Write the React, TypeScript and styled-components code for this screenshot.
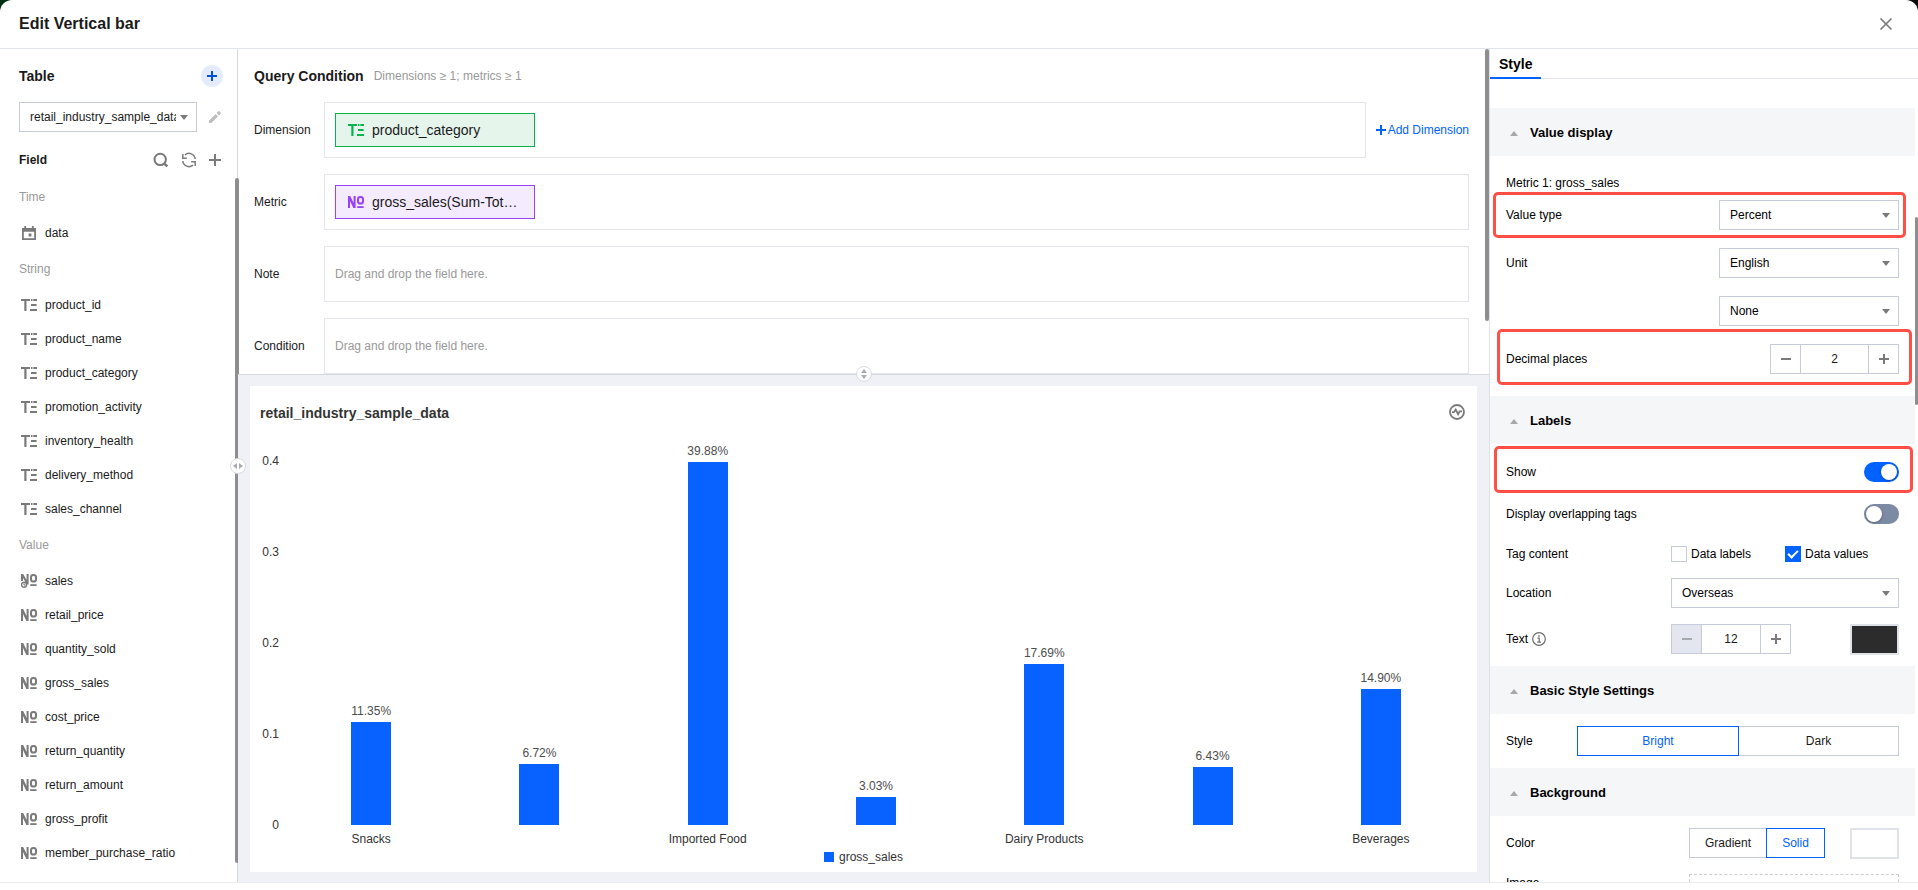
import React from 'react';
import styled, { createGlobalStyle, css } from 'styled-components';

const GlobalStyle = createGlobalStyle`
  *, *::before, *::after { box-sizing: border-box; }
  body {
    margin: 0;
    background: linear-gradient(90deg, #003010 0%, #0a0a0a 40%);
    font-family: "Liberation Sans", Arial, sans-serif;
    font-size: 12px;
    line-height: 18px;
    color: #1a1a1a;
  }
  h1, h2, h3, ul, dl { margin: 0; padding: 0; }
  button, input, select { font: inherit; color: inherit; margin: 0; }
  svg { display: block; flex: none; }
`;

const LINE = '#e3e5ed';
const CONTROL = '#c5cbd9';
const BLUE = '#0062ff';
const BAR_BLUE = '#0762ff';

const Modal = styled.div`
  display: flex;
  flex-direction: column;
  height: 100vh;
  background: #fff;
  border-radius: 12px 12px 0 0;
  overflow: hidden;
`;

const Header = styled.header`
  display: flex;
  align-items: center;
  justify-content: space-between;
  flex: none;
  height: 49px;
  padding: 0 25px 0 19px;
  border-bottom: 1px solid ${LINE};
`;

const Title = styled.h1`
  font-size: 16px;
  line-height: 20px;
`;

const IconButton = styled.button<{ $color?: string }>`
  display: flex;
  align-items: center;
  justify-content: center;
  padding: 0;
  border: 0;
  background: none;
  color: ${(p) => p.$color ?? '#7a7a7a'};
  cursor: pointer;
`;

const Body = styled.div`
  position: relative;
  display: grid;
  grid-template-columns: 238px minmax(0, 1fr) 429px;
  flex: 1;
  min-height: 0;
  margin-bottom: 7px;
  border-bottom: 1px solid #ebebeb;
`;

const SideBar = styled.aside`
  position: relative;
  display: flex;
  flex-direction: column;
  min-height: 0;
  border-right: 1px solid #d5d7de;
`;

const SideTop = styled.div`
  display: flex;
  align-items: center;
  justify-content: space-between;
  flex: none;
  height: 53px;
  padding: 0 14px 0 19px;
`;

const GroupTitle = styled.h2`
  padding-top: 1px;
  font-size: 14px;
  line-height: 20px;
`;

const RoundAdd = styled(IconButton)`
  width: 22px;
  height: 22px;
  border-radius: 50%;
  background: #e4ebfc;
`;

const TablePicker = styled.div`
  display: flex;
  align-items: center;
  justify-content: space-between;
  flex: none;
  height: 30px;
  padding: 0 16px 0 19px;
`;

const SelectWrap = styled.label<{ $width: number }>`
  position: relative;
  display: block;
  width: ${(p) => p.$width}px;
  &::after {
    content: '';
    position: absolute;
    right: 9px;
    top: 13px;
    border: 4px solid transparent;
    border-top: 5px solid #7a7a7a;
    border-bottom: 0;
    pointer-events: none;
  }
`;

const Select = styled.select`
  display: block;
  width: 100%;
  height: 30px;
  padding: 0 20px 0 10px;
  border: 1px solid ${CONTROL};
  border-radius: 0;
  background: #fff;
  appearance: none;
  white-space: nowrap;
  text-overflow: clip;
`;

const FieldBar = styled.div`
  display: flex;
  align-items: center;
  gap: 12px;
  flex: none;
  height: 46px;
  padding: 10px 16px 0 19px;
`;

const FieldTitle = styled.h3`
  flex: 1;
  font-size: 12px;
  line-height: 18px;
`;

const FieldScroll = styled.div`
  flex: 1;
  min-height: 0;
  overflow: hidden;
  padding-left: 19px;
`;

const FieldGroup = styled.h3`
  display: flex;
  align-items: center;
  height: 38px;
  font-size: 12px;
  font-weight: 400;
  color: #999;
`;

const FieldList = styled.ul`
  list-style: none;
`;

const FieldItem = styled.li`
  display: flex;
  align-items: center;
  gap: 8px;
  height: 34px;
  padding-left: 2px;
  svg { color: #7a7a7a; }
`;

const ScrollThumb = styled.i<{ $side: 'left' | 'query' | 'style' }>`
  position: absolute;
  border-radius: 2px;
  background: #8e8e8e;
  ${(p) => p.$side === 'left' && css`right: -2px; top: 129px; bottom: 19px; width: 4px;`}
  ${(p) => p.$side === 'query' && css`right: 0; top: 0; height: 272px; width: 4px;`}
  ${(p) => p.$side === 'style' && css`right: 0; top: 168px; height: 188px; width: 3px;`}
`;

const Center = styled.main`
  position: relative;
  display: flex;
  flex-direction: column;
  min-width: 0;
  min-height: 0;
`;

const Query = styled.section`
  position: relative;
  flex: 0 0 326px;
  overflow: hidden;
  padding: 0 20px 0 16px;
  border-bottom: 1px solid #d8d9dc;
`;

const QueryHead = styled.div`
  display: flex;
  align-items: center;
  gap: 10px;
  height: 53px;
`;

const Hint = styled.span`
  padding-top: 1px;
  color: #999;
`;

const QueryRow = styled.div`
  display: flex;
  align-items: center;
  height: 56px;
  margin-bottom: 16px;
`;

const QueryLabel = styled.span`
  flex: 0 0 70px;
`;

const DropZone = styled.div`
  display: flex;
  align-items: center;
  flex: 1;
  height: 56px;
  padding: 0 10px;
  border: 1px solid ${LINE};
  color: #999;
`;

const Chip = styled.button<{ $tone: 'green' | 'violet' }>`
  display: flex;
  align-items: center;
  gap: 8px;
  width: 200px;
  height: 34px;
  padding: 0 12px;
  border: 1px solid ${(p) => (p.$tone === 'green' ? '#07b34e' : '#9a3ffb')};
  background: ${(p) => (p.$tone === 'green' ? '#e5f5ec' : '#f5ebff')};
  color: #1a1a1a;
  font-size: 14px;
  line-height: 20px;
  svg { color: ${(p) => (p.$tone === 'green' ? '#07b34e' : '#9a3ffb')}; }
`;

const AddDimension = styled.button`
  display: flex;
  align-items: center;
  gap: 2px;
  padding: 0;
  margin-left: 10px;
  border: 0;
  background: none;
  color: ${BLUE};
  white-space: nowrap;
`;

const Result = styled.section`
  position: relative;
  display: flex;
  flex: 1;
  min-height: 0;
  padding: 11px 12px 10px;
  background: #eff1f6;
`;

const Card = styled.div`
  display: flex;
  flex-direction: column;
  flex: 1;
  min-width: 0;
  background: #fff;
`;

const CardHead = styled.div`
  display: flex;
  align-items: center;
  justify-content: space-between;
  flex: none;
  height: 52px;
  padding: 0 12px 0 10px;
  color: #333;
`;

const Chart = styled.div`
  display: flex;
  flex: 1;
  min-height: 0;
  padding: 23px 12px 0 0;
  color: #333;
`;

const YAxis = styled.div`
  display: flex;
  flex-direction: column;
  justify-content: space-between;
  flex: 0 0 29px;
  margin: -9px 8px -9px 0;
  text-align: right;
`;

const Plot = styled.div`
  display: flex;
  flex: 1;
`;

const Slot = styled.div`
  display: flex;
  flex-direction: column;
  align-items: center;
  justify-content: flex-end;
  flex: 1 1 0;
  min-width: 0;
`;

const BarValue = styled.span`
  flex: none;
  padding-bottom: 2px;
  color: #4d4d4d;
`;

const Bar = styled.div`
  flex: none;
  width: 40px;
  background: ${BAR_BLUE};
`;

const XAxis = styled.div`
  display: flex;
  flex: none;
  margin-top: 5px;
  padding: 0 12px 0 37px;
  color: #333;
  span {
    flex: 1 1 0;
    text-align: center;
    white-space: nowrap;
  }
`;

const Legend = styled.div`
  display: flex;
  align-items: center;
  justify-content: center;
  gap: 5px;
  flex: none;
  padding-bottom: 6px;
  color: #333;
  &::before {
    content: '';
    width: 10px;
    height: 10px;
    background: ${BAR_BLUE};
  }
`;

const SplitHandle = styled.button<{ $axis: 'x' | 'y' }>`
  position: absolute;
  z-index: 2;
  display: flex;
  flex-direction: ${(p) => (p.$axis === 'x' ? 'row' : 'column')};
  align-items: center;
  justify-content: center;
  gap: 2px;
  width: 16px;
  height: 16px;
  padding: 0;
  border: 1px solid #d9dbe3;
  border-radius: 50%;
  background: #fff;
  ${(p) => (p.$axis === 'x' ? css`left: 230px; top: calc(50% - 8px);` : css`left: calc(50% - 8px); top: -9px;`)}
`;

const Inspector = styled.aside`
  position: relative;
  display: flex;
  flex-direction: column;
  min-height: 0;
  overflow: hidden;
  border-left: 1px solid #dfe1e8;
  color: #000;
`;

const Tabs = styled.div`
  display: flex;
  flex: none;
  height: 30px;
  border-bottom: 1px solid ${LINE};
`;

const Tab = styled.button`
  height: 30px;
  padding: 2px 9px 0;
  border: 0;
  border-bottom: 2px solid ${BLUE};
  background: none;
  font-size: 14px;
  font-weight: 700;
  line-height: 20px;
`;

const Panels = styled.div`
  padding: 29px 3px 0 0;
`;

const SectionHead = styled.h2`
  display: flex;
  align-items: center;
  gap: 12px;
  height: 48px;
  padding: 2px 0 0 20px;
  background: #f5f6f8;
  font-size: 13px;
  line-height: 20px;
  &::before {
    content: '';
    border: 4px solid transparent;
    border-bottom: 5px solid #a8a8a8;
    border-top: 0;
  }
`;

const SectionBody = styled.div<{ $top: number; $bottom: number; $gap: number }>`
  display: flex;
  flex-direction: column;
  gap: ${(p) => p.$gap}px;
  padding: ${(p) => p.$top}px 16px ${(p) => p.$bottom}px;
`;

const Row = styled.div<{ $h?: number; $top?: boolean }>`
  position: relative;
  display: flex;
  align-items: ${(p) => (p.$top ? 'flex-start' : 'center')};
  justify-content: space-between;
  height: ${(p) => p.$h ?? 30}px;
`;

const Callout = styled.div<{ $inset: string }>`
  position: absolute;
  z-index: 1;
  inset: ${(p) => p.$inset};
  border: 3px solid #ff4f47;
  border-radius: 5px;
  pointer-events: none;
`;

const LabelWithIcon = styled.label`
  display: flex;
  align-items: center;
  gap: 4px;
`;

const Controls = styled.div<{ $width: number }>`
  display: flex;
  align-items: center;
  justify-content: space-between;
  width: ${(p) => p.$width}px;
`;

const StepperBox = styled.div<{ $width: number }>`
  display: flex;
  width: ${(p) => p.$width}px;
  height: 30px;
  border: 1px solid ${CONTROL};
  input {
    flex: 1;
    min-width: 0;
    padding: 0;
    border: solid ${CONTROL};
    border-width: 0 1px;
    border-radius: 0;
    background: #fff;
    text-align: center;
    color: #1a1a1a;
  }
`;

const StepButton = styled(IconButton)`
  width: 29px;
  &:disabled {
    background: #e3e6ee;
    color: #a6a8ae;
  }
`;

const Switch = styled.input`
  display: flex;
  align-items: center;
  width: 35px;
  height: 20px;
  padding: 0 2px;
  border-radius: 10px;
  background: #7c8ba3;
  appearance: none;
  &::before {
    content: '';
    width: 16px;
    height: 16px;
    border-radius: 50%;
    background: #fff;
    box-shadow: 0 1px 3px rgba(0, 0, 0, 0.3);
  }
  &:checked {
    justify-content: flex-end;
    background: ${BLUE};
  }
`;

const CheckLabel = styled.label`
  display: flex;
  align-items: center;
  gap: 4px;
  flex: 1;
`;

const CheckBox = styled.input`
  display: flex;
  align-items: center;
  justify-content: center;
  width: 16px;
  height: 16px;
  border: 1px solid ${CONTROL};
  background: #fff;
  appearance: none;
  &:checked {
    border-color: ${BLUE};
    background: ${BLUE};
  }
  &:checked::before {
    content: '';
    width: 10px;
    height: 6px;
    margin-top: -3px;
    border: solid #fff;
    border-width: 0 0 2px 2px;
    transform: rotate(-45deg);
  }
`;

const Swatch = styled.input`
  width: 49px;
  height: 31px;
  padding: 0;
  border: 2px solid #dfe2e9;
  background: none;
  appearance: none;
  &::-webkit-color-swatch-wrapper { padding: 0; }
  &::-webkit-color-swatch { border: 0; border-radius: 0; }
`;

const Segments = styled.div`
  display: flex;
`;

const Segment = styled.button<{ $on?: boolean; $width: number }>`
  position: relative;
  z-index: ${(p) => (p.$on ? 1 : 0)};
  width: ${(p) => p.$width}px;
  height: 30px;
  padding: 0;
  border: 1px solid ${(p) => (p.$on ? BLUE : CONTROL)};
  background: #fff;
  color: ${(p) => (p.$on ? BLUE : '#1a1a1a')};
  & + & { margin-left: -1px; }
`;

const ImageDrop = styled.button`
  width: 210px;
  height: 60px;
  border: 1px dashed #cfcfcf;
  background: #fff;
`;

function TextIcon() {
  return (
    <svg width="16" height="12" viewBox="0 0 16 12" fill="currentColor" aria-hidden="true">
      <path d="M0 0h9v2H5.500v10H3.300V2H0zM10 0h1.500v2H10zM12.300 0H16v2h-3.700zM10 5h5.600v2H10zM9 10h7v2H9z" />
    </svg>
  );
}

function NumberIcon({ clock = false }: { clock?: boolean }) {
  return (
    <svg width="16" height={clock ? 14 : 12} viewBox={clock ? '0 0 16 14' : '0 0 16 12'} fill="none" stroke="currentColor" aria-hidden="true">
      <path
        d={clock ? 'M0 0h2.200l3.400 6V0h2v10.500H6L2 4v3H0z' : 'M0 0h2.200l3.400 7V0h2v12H5.400L2 5v7H0z'}
        fill="currentColor"
        stroke="none"
      />
      <rect x="10" y="1" width="5" height="6.600" rx="2.400" strokeWidth="2" />
      <path d="M9.200 11.100h6.400" strokeWidth="1.800" />
      {clock && (
        <>
          <circle cx="3" cy="10.800" r="2.500" fill="#fff" strokeWidth="1.400" />
          <path d="M3 9.400v1.600h1.400" strokeWidth="1" />
        </>
      )}
    </svg>
  );
}

function DateIcon() {
  return (
    <svg width="16" height="15" viewBox="0 0 16 15" fill="none" stroke="currentColor" aria-hidden="true">
      <path d="M1.900 2.900h12.200v10.200H1.900z" strokeWidth="1.800" />
      <path d="M1 4.200h14" strokeWidth="3" />
      <path d="M4.200 0v3M11.800 0v3" strokeWidth="1.800" />
      <path d="M7.600 7.600h2.800v2.800H7.600z" fill="currentColor" stroke="none" />
    </svg>
  );
}

function Plus({ size = 12, weight = 2 }: { size?: number; weight?: number }) {
  return (
    <svg width={size} height={size} viewBox={`0 0 ${size} ${size}`} stroke="currentColor" strokeWidth={weight} aria-hidden="true">
      <path d={`M0 ${size / 2}h${size}M${size / 2} 0v${size}`} />
    </svg>
  );
}

function Minus() {
  return (
    <svg width="10" height="10" viewBox="0 0 10 10" stroke="currentColor" strokeWidth="2" aria-hidden="true">
      <path d="M0 5h10" />
    </svg>
  );
}

function Triangle({ dir }: { dir: 'left' | 'right' | 'up' | 'down' }) {
  const path = { left: 'M4 0v6L0 3z', right: 'M0 0v6l4-3z', up: 'M0 4h6L3 0z', down: 'M0 0h6L3 4z' }[dir];
  const flat = dir === 'up' || dir === 'down';
  return (
    <svg width={flat ? 6 : 4} height={flat ? 4 : 6} fill="#a9abb3" aria-hidden="true">
      <path d={path} />
    </svg>
  );
}

const STRING_FIELDS = ['product_id', 'product_name', 'product_category', 'promotion_activity', 'inventory_health', 'delivery_method', 'sales_channel'];
const VALUE_FIELDS = ['sales', 'retail_price', 'quantity_sold', 'gross_sales', 'cost_price', 'return_quantity', 'return_amount', 'gross_profit', 'member_purchase_ratio'];

const AXIS_MAX = 0.4;
const BARS = [
  { value: 0.1135, label: 'Snacks' },
  { value: 0.0672, label: '' },
  { value: 0.3988, label: 'Imported Food' },
  { value: 0.0303, label: '' },
  { value: 0.1769, label: 'Dairy Products' },
  { value: 0.0643, label: '' },
  { value: 0.149, label: 'Beverages' },
];

function Dropdown({ id, width, value, name }: { id?: string; width: number; value: string; name?: string }) {
  return (
    <SelectWrap $width={width}>
      <Select id={id} aria-label={name} defaultValue={value}>
        <option>{value}</option>
      </Select>
    </SelectWrap>
  );
}

function Stepper({ id, width, value, atMin }: { id: string; width: number; value: number; atMin?: boolean }) {
  return (
    <StepperBox $width={width}>
      <StepButton type="button" aria-label="Decrease" disabled={atMin}><Minus /></StepButton>
      <input id={id} type="text" inputMode="numeric" defaultValue={value} />
      <StepButton type="button" aria-label="Increase"><Plus size={10} /></StepButton>
    </StepperBox>
  );
}

function FieldPanel() {
  return (
    <SideBar>
      <SideTop>
        <GroupTitle>Table</GroupTitle>
        <RoundAdd type="button" aria-label="Add table" $color="#0052d9"><Plus size={10} /></RoundAdd>
      </SideTop>
      <TablePicker>
        <Dropdown width={178} value="retail_industry_sample_data" name="Table" />
        <IconButton type="button" aria-label="Edit table" $color="#bdbdbd">
          <svg width="12" height="12" viewBox="0 0 12 12" fill="currentColor">
            <path d="M0 9.600V12h2.400l6.700-6.700-2.400-2.400zM7.600 2l2.400 2.400 1.700-1.700c.3-.3.3-.7 0-1L10.300 .3c-.3-.3-.7-.3-1 0z" />
          </svg>
        </IconButton>
      </TablePicker>
      <FieldBar>
        <FieldTitle>Field</FieldTitle>
        <IconButton type="button" aria-label="Search">
          <svg width="16" height="16" viewBox="0 0 16 16" fill="none" stroke="currentColor" strokeWidth="2">
            <circle cx="7.200" cy="7.400" r="5.700" />
            <path d="M11 11.400l3.400 3" strokeWidth="2.600" />
          </svg>
        </IconButton>
        <IconButton type="button" aria-label="Refresh">
          <svg width="16" height="16" viewBox="0 0 16 16" fill="none" stroke="currentColor" strokeWidth="1.500">
            <path d="M4 2.900A6.200 6.200 0 0 1 14.200 7M12 13.100A6.200 6.200 0 0 1 1.800 9" />
            <path d="M1.800 2v4.200h4M14.200 14V9.800h-4" />
          </svg>
        </IconButton>
        <IconButton type="button" aria-label="Add field"><Plus size={12} /></IconButton>
      </FieldBar>
      <FieldScroll>
        <FieldGroup>Time</FieldGroup>
        <FieldList>
          <FieldItem><DateIcon />data</FieldItem>
        </FieldList>
        <FieldGroup>String</FieldGroup>
        <FieldList>
          {STRING_FIELDS.map((f) => <FieldItem key={f}><TextIcon />{f}</FieldItem>)}
        </FieldList>
        <FieldGroup>Value</FieldGroup>
        <FieldList>
          {VALUE_FIELDS.map((f) => <FieldItem key={f}><NumberIcon clock={f === 'sales'} />{f}</FieldItem>)}
        </FieldList>
      </FieldScroll>
      <ScrollThumb $side="left" />
    </SideBar>
  );
}

function QueryPanel() {
  return (
    <Query>
      <QueryHead>
        <GroupTitle>Query Condition</GroupTitle>
        <Hint>Dimensions ≥ 1; metrics ≥ 1</Hint>
      </QueryHead>
      <QueryRow>
        <QueryLabel>Dimension</QueryLabel>
        <DropZone><Chip type="button" $tone="green"><TextIcon />product_category</Chip></DropZone>
        <AddDimension type="button"><Plus size={10} />Add Dimension</AddDimension>
      </QueryRow>
      <QueryRow>
        <QueryLabel>Metric</QueryLabel>
        <DropZone><Chip type="button" $tone="violet"><NumberIcon />gross_sales(Sum-Tot…</Chip></DropZone>
      </QueryRow>
      <QueryRow>
        <QueryLabel>Note</QueryLabel>
        <DropZone>Drag and drop the field here.</DropZone>
      </QueryRow>
      <QueryRow>
        <QueryLabel>Condition</QueryLabel>
        <DropZone>Drag and drop the field here.</DropZone>
      </QueryRow>
      <ScrollThumb $side="query" />
    </Query>
  );
}

function ResultPanel() {
  return (
    <Result>
      <SplitHandle type="button" $axis="y" aria-label="Resize chart">
        <Triangle dir="up" />
        <Triangle dir="down" />
      </SplitHandle>
      <Card>
        <CardHead>
          <GroupTitle>retail_industry_sample_data</GroupTitle>
          <IconButton type="button" aria-label="Monitor">
            <svg width="16" height="16" viewBox="0 0 16 16" fill="none" stroke="currentColor" strokeWidth="1.800">
              <circle cx="8" cy="8" r="7" />
              <path d="M3 8.200h2l1.700-2.600 2.400 4.600 1.500-2.800h2.400" />
            </svg>
          </IconButton>
        </CardHead>
        <Chart>
          <YAxis>
            {['0.4', '0.3', '0.2', '0.1', '0'].map((t) => <span key={t}>{t}</span>)}
          </YAxis>
          <Plot>
            {BARS.map((b) => (
              <Slot key={b.value}>
                <BarValue>{(b.value * 100).toFixed(2)}%</BarValue>
                <Bar style={{ height: `${(b.value / AXIS_MAX) * 100}%` }} />
              </Slot>
            ))}
          </Plot>
        </Chart>
        <XAxis>{BARS.map((b) => <span key={b.value}>{b.label}</span>)}</XAxis>
        <Legend>gross_sales</Legend>
      </Card>
    </Result>
  );
}

function StylePanel() {
  return (
    <Inspector>
      <Tabs><Tab type="button">Style</Tab></Tabs>
      <Panels>
        <SectionHead>Value display</SectionHead>
        <SectionBody $top={19} $bottom={13} $gap={0}>
          <Row $h={16}>Metric 1: gross_sales</Row>
          <Row $h={48}>
            <label htmlFor="value-type">Value type</label>
            <Dropdown id="value-type" width={180} value="Percent" />
            <Callout $inset="1px -7px 1px -13px" />
          </Row>
          <Row $h={48}>
            <label htmlFor="unit">Unit</label>
            <Dropdown id="unit" width={180} value="English" />
          </Row>
          <Row $h={48}>
            <span />
            <Dropdown width={180} value="None" name="Unit scale" />
          </Row>
          <Row $h={48}>
            <label htmlFor="decimals">Decimal places</label>
            <Stepper id="decimals" width={129} value={2} />
            <Callout $inset="-6px -13px -2px -9px" />
          </Row>
        </SectionBody>
        <SectionHead>Labels</SectionHead>
        <SectionBody $top={18} $bottom={12} $gap={16}>
          <Row $h={20}>
            <label htmlFor="show">Show</label>
            <Switch id="show" type="checkbox" role="switch" defaultChecked />
            <Callout $inset="-16px -14px -11px -12px" />
          </Row>
          <Row $h={32}>
            <label htmlFor="overlap">Display overlapping tags</label>
            <Switch id="overlap" type="checkbox" role="switch" />
          </Row>
          <Row $h={16}>
            <span>Tag content</span>
            <Controls $width={228}>
              <CheckLabel><CheckBox type="checkbox" />Data labels</CheckLabel>
              <CheckLabel><CheckBox type="checkbox" defaultChecked />Data values</CheckLabel>
            </Controls>
          </Row>
          <Row>
            <label htmlFor="location">Location</label>
            <Dropdown id="location" width={228} value="Overseas" />
          </Row>
          <Row>
            <LabelWithIcon htmlFor="text-size">
              Text
              <svg width="14" height="14" viewBox="0 0 14 14" fill="none" stroke="#6e6e6e" aria-hidden="true">
                <circle cx="7" cy="7" r="6.300" strokeWidth="1.200" />
                <path d="M5.500 6.200H7.200V10.200M5.200 10.200h3.800" strokeWidth="1.200" />
                <path d="M6.200 3.200h1.500v1.500H6.200z" fill="#6e6e6e" stroke="none" />
              </svg>
            </LabelWithIcon>
            <Controls $width={228}>
              <Stepper id="text-size" width={120} value={12} atMin />
              <Swatch type="color" defaultValue="#2c2c2c" aria-label="Text color" />
            </Controls>
          </Row>
        </SectionBody>
        <SectionHead>Basic Style Settings</SectionHead>
        <SectionBody $top={12} $bottom={12} $gap={16}>
          <Row>
            <span>Style</span>
            <Segments>
              <Segment type="button" $on $width={162}>Bright</Segment>
              <Segment type="button" $width={161}>Dark</Segment>
            </Segments>
          </Row>
        </SectionBody>
        <SectionHead>Background</SectionHead>
        <SectionBody $top={12} $bottom={12} $gap={16}>
          <Row>
            <span>Color</span>
            <Controls $width={210}>
              <Segments>
                <Segment type="button" $width={78}>Gradient</Segment>
                <Segment type="button" $on $width={59}>Solid</Segment>
              </Segments>
              <Swatch type="color" defaultValue="#ffffff" aria-label="Background color" />
            </Controls>
          </Row>
          <Row $h={60} $top>
            <span>Image</span>
            <ImageDrop type="button" aria-label="Upload image" />
          </Row>
        </SectionBody>
      </Panels>
      <ScrollThumb $side="style" />
    </Inspector>
  );
}

export default function App() {
  return (
    <>
      <GlobalStyle />
      <Modal>
        <Header>
          <Title>Edit Vertical bar</Title>
          <IconButton type="button" aria-label="Close">
            <svg width="14" height="14" viewBox="0 0 14 14" stroke="currentColor" strokeWidth="1.700">
              <path d="M1.500 1.500l11 11M12.500 1.500l-11 11" />
            </svg>
          </IconButton>
        </Header>
        <Body>
          <FieldPanel />
          <Center>
            <QueryPanel />
            <ResultPanel />
          </Center>
          <StylePanel />
          <SplitHandle type="button" $axis="x" aria-label="Resize fields">
            <Triangle dir="left" />
            <Triangle dir="right" />
          </SplitHandle>
        </Body>
      </Modal>
    </>
  );
}
